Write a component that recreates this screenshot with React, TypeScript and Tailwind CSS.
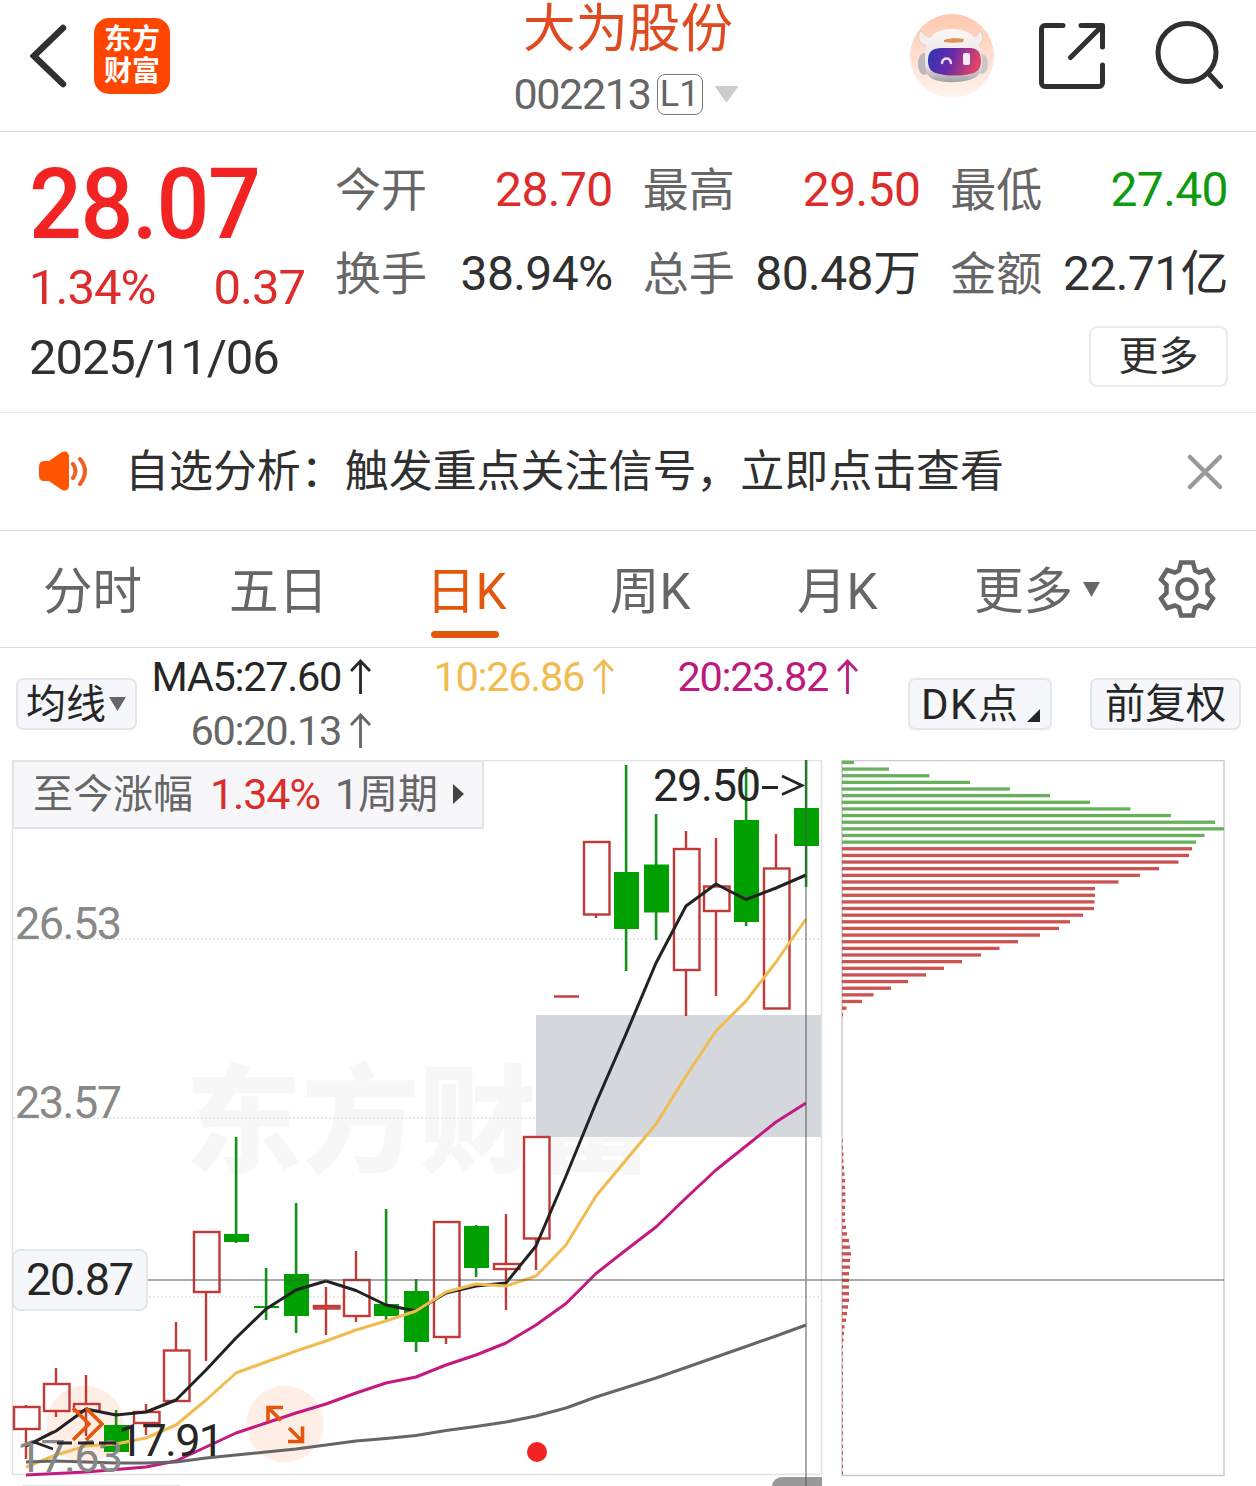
import type { ReactNode } from "react";
import clsx from "clsx";

type Candle = {
  up: boolean;
  high: number;
  top: number;
  bottom: number;
  low: number;
};

type Stat = {
  label: string;
  value: string;
  color: string;
};

const stats: Stat[] = [
  { label: "今开", value: "28.70", color: "text-[#dd2c2c]" },
  { label: "最高", value: "29.50", color: "text-[#dd2c2c]" },
  { label: "最低", value: "27.40", color: "text-[#0f9a0f]" },
  { label: "换手", value: "38.94%", color: "text-[#303030]" },
  { label: "总手", value: "80.48万", color: "text-[#303030]" },
  { label: "金额", value: "22.71亿", color: "text-[#303030]" },
];

const tabs = [
  { name: "分时", width: "w-[186px]" },
  { name: "五日", width: "w-[197px]" },
  { name: "日K", width: "w-[184px]", active: true },
  { name: "周K", width: "w-[187px]" },
  { name: "月K", width: "w-[177px]" },
];

const candles: Candle[] = [
  { up: true, high: 1405, top: 1407, bottom: 1429, low: 1459 },
  { up: true, high: 1368, top: 1384, bottom: 1411, low: 1417 },
  { up: true, high: 1375, top: 1404, bottom: 1411, low: 1436 },
  { up: false, high: 1410, top: 1425, bottom: 1452, low: 1452 },
  { up: true, high: 1404, top: 1412, bottom: 1423, low: 1435 },
  { up: true, high: 1322, top: 1350.5, bottom: 1401, low: 1401 },
  { up: true, high: 1232, top: 1232, bottom: 1292, low: 1361 },
  { up: false, high: 1137, top: 1234, bottom: 1242, low: 1243 },
  { up: false, high: 1268, top: 1306, bottom: 1308, low: 1320 },
  { up: false, high: 1203, top: 1274, bottom: 1316, low: 1333 },
  { up: true, high: 1287, top: 1306, bottom: 1308.5, low: 1335 },
  { up: true, high: 1251, top: 1280, bottom: 1316, low: 1322 },
  { up: false, high: 1209, top: 1304, bottom: 1316, low: 1320 },
  { up: false, high: 1279, top: 1291, bottom: 1342, low: 1352 },
  { up: true, high: 1222, top: 1222, bottom: 1337, low: 1344 },
  { up: false, high: 1225, top: 1226, bottom: 1268, low: 1277 },
  { up: true, high: 1214, top: 1264, bottom: 1269, low: 1310 },
  { up: true, high: 1137, top: 1137, bottom: 1238.5, low: 1270 },
  { up: true, high: 996.5, top: 996.5, bottom: 996.5, low: 996.5 },
  { up: true, high: 842, top: 842, bottom: 914.5, low: 918 },
  { up: false, high: 765, top: 872, bottom: 929, low: 971 },
  { up: false, high: 814, top: 864.5, bottom: 912.5, low: 940 },
  { up: true, high: 831, top: 849, bottom: 970, low: 1016 },
  { up: true, high: 838, top: 886.5, bottom: 911, low: 996 },
  { up: false, high: 767, top: 820, bottom: 922, low: 926 },
  { up: true, high: 834, top: 868.5, bottom: 1008.5, low: 1008.5 },
  { up: false, high: 760, top: 808, bottom: 846, low: 887 },
];

// Moving averages, one value per candle
const ma5 = [
  1446, 1431, 1409, 1415, 1412, 1400, 1370, 1338, 1309, 1290, 1281, 1290.5, 1305, 1311,
  1293, 1286, 1283, 1246, 1176, 1103, 1034, 963, 906, 884, 899.5, 888, 875,
];
const ma10 = [
  1467, 1455, 1446, 1444, 1438, 1425, 1400, 1373, 1362, 1351, 1341, 1330, 1321, 1311,
  1292, 1284, 1286, 1276, 1245, 1196, 1160, 1124, 1076, 1031, 1001, 962, 919,
];
const ma20 = [
  1475, 1473.5, 1472, 1469.5, 1467, 1461, 1447, 1433, 1423, 1413, 1404, 1393, 1383, 1377,
  1365, 1355, 1343, 1325, 1303.5, 1273.5, 1250, 1227, 1198, 1170, 1146, 1122, 1103,
];
const ma60 = [
  1462, 1461, 1462, 1463, 1463, 1462, 1458, 1455, 1452, 1449, 1445, 1441, 1438.5, 1435.5,
  1430.5, 1426.5, 1422, 1416, 1408, 1397, 1387.5, 1378, 1367.5, 1357, 1346.5, 1336, 1325,
];

// Chip distribution, row index -> bar length
const chipTop = [
  12, 47, 87.5, 128, 168, 208, 248, 288.5, 329, 373, 382, 362.5, 354, 350, 347, 336.5, 317,
  298, 276.5, 253, 253, 252.5, 252, 241, 228, 217, 198, 176, 157.5, 139, 120, 102, 84, 66,
  49, 31.5, 20, 4.5, 1,
];
const chipLow = [
  0.7, 1, 1.5, 1.5, 2, 2.5, 3, 3, 3.5, 3.5, 3, 3, 3, 4, 5, 7, 8, 9, 8, 8, 7, 7, 7, 7, 7, 6,
  5, 4, 2.5, 2, 1.5,
];
const chips = [
  ...chipTop,
  ...Array<number>(18).fill(0),
  ...chipLow,
  ...Array<number>(20).fill(0.9),
];

const candleX = (i: number) => 26 + i * 30;

const toPoints = (values: number[]) =>
  values.map((v, i) => `${candleX(i)},${v}`).join(" ");

const RobotAvatar = () => (
  <svg width="84" height="84" viewBox="0 0 84 84">
    <defs>
      <linearGradient id="halo" x1="0" y1="0" x2="0" y2="1">
        <stop offset="0" stopColor="#ffc8ae" />
        <stop offset="1" stopColor="#fff4ef" />
      </linearGradient>
      <linearGradient id="visor" x1="0" y1="0" x2="1" y2="0.2">
        <stop offset="0" stopColor="#2b36b4" />
        <stop offset="0.5" stopColor="#6a2aa6" />
        <stop offset="1" stopColor="#e04468" />
      </linearGradient>
      <linearGradient id="helmet" x1="0" y1="0" x2="0" y2="1">
        <stop offset="0" stopColor="#fbf8f7" />
        <stop offset="0.7" stopColor="#e6e2e4" />
        <stop offset="1" stopColor="#a39ea2" />
      </linearGradient>
    </defs>
    <circle cx="42" cy="42" r="42" fill="url(#halo)" />
    <path d="M11 16c-5 7-2 15 7 16l8-9c-7 1-13-1-15-7zM70 16c5 7 3 15-5 16l-8-9c7 1 11-1 13-7z" fill="#f6eeeb" stroke="#dcc9c2" strokeWidth="0.800" />
    <ellipse cx="14" cy="50" rx="6" ry="11" fill="#bdb6ba" />
    <ellipse cx="72" cy="50" rx="6" ry="10" fill="#cdc6c9" />
    <path d="M15 45c0-20 8-30 27-30s27 9 30 30c1 13-3 18-13 21-12 3-23 3-34 0-9-3-10-10-10-21z" fill="url(#helmet)" />
    <path d="M34 26c5-2 14-2 20-1l-1 3c-6 1-13 1-19 0z" fill="#df9357" />
    <path d="M18 47c0-10 5-13 14-13h28c8 0 11 5 11 13 0 8-4 12-11 13-10 2-22 2-30 0-8-1-12-5-12-13z" fill="url(#visor)" />
    <path d="M32 49c1-6 8-6 9 0" fill="none" stroke="#e9dcff" strokeWidth="2.400" strokeLinecap="round" />
    <rect x="53" y="39" width="7" height="12" rx="2" fill="#f6e9f7" />
  </svg>
);

const Header = () => (
  <header className="flex h-[132px] items-start justify-between border-b border-[#d6d6d6]">
    <div className="flex w-[346px] gap-[27px] pt-[18px] pl-[30px]">
      <svg width="37" height="76" viewBox="0 0 37 76">
        <path d="M33 10 4 38l29 28" fill="none" stroke="#303030" strokeWidth="6.500" strokeLinecap="round" strokeLinejoin="miter" />
      </svg>
      <div className="flex h-[76px] w-[76px] flex-col items-center justify-center rounded-[15px] bg-[#ff4600] text-[28px] leading-[32px] font-bold text-white">
        <span>东方</span>
        <span>财富</span>
      </div>
    </div>

    <div className="flex flex-col items-center">
      <h1 className="text-[52.500px] leading-[59px] text-[#e04a20]">大为股份</h1>
      <div className="mt-[14px] mr-[4px] flex h-[42px] items-center">
        <span className="text-[43px] leading-[42px] tracking-[-1.300px] text-[#666]">002213</span>
        <span className="ml-[6px] flex h-[41px] w-[46px] items-center justify-center rounded-[8px] border border-[#777] text-[36px] leading-[40px] text-[#666]">
          L1
        </span>
        <svg className="ml-[11px]" width="25" height="17" viewBox="0 0 25 17">
          <path d="M1 0h23L12.500 16z" fill="#ccc" stroke="#ccc" strokeLinejoin="round" />
        </svg>
      </div>
    </div>

    <div className="flex w-[346px] items-start justify-end gap-[46px] pt-[14px] pr-[33px]">
      <RobotAvatar />
      <svg className="mt-[9px] -ml-px" width="66" height="66" viewBox="0 0 66 66" fill="none" stroke="#303030" strokeWidth="5" strokeLinecap="round" strokeLinejoin="round">
        <path d="M24 2.500H6a3.500 3.500 0 0 0-3.500 3.500v54A3.500 3.500 0 0 0 6 63.500h54a3.500 3.500 0 0 0 3.500-3.500V42" />
        <path d="M42 2.500h21.500V24M62 4 31.500 34.500" />
      </svg>
      <svg className="mt-[7px] ml-[4px]" width="68" height="68" viewBox="0 0 68 68" fill="none" stroke="#303030" strokeWidth="5" strokeLinecap="round">
        <circle cx="32" cy="31.500" r="29" />
        <path d="m53 52 12.500 13.500" />
      </svg>
    </div>
  </header>
);

const Quote = () => (
  <section className="flex h-[281px] border-b border-[#ebebeb]">
    <div className="flex w-[335px] flex-col pt-[27px] pl-[29px]">
      <strong className="origin-left scale-x-94 text-[99px] leading-[90px] font-medium tracking-[-1.500px] text-[#f12323]">
        28.07
      </strong>
      <div className="mt-[14px] flex w-[276px] justify-between text-[49px] leading-[50px] tracking-[-1px] text-[#dd2c2c]">
        <span>1.34%</span>
        <span>0.37</span>
      </div>
      <span className="mt-[20px] text-[49px] leading-[50px] tracking-[-1.100px] text-[#303030]">
        2025/11/06
      </span>
    </div>

    <div className="flex w-[893px] flex-col items-end pt-[30px]">
      <div className="grid w-full grid-cols-3 gap-x-[30px] gap-y-[28px]">
        {stats.map((stat) => (
          <div key={stat.label} className="flex h-[56px] items-baseline justify-between leading-[56px] whitespace-nowrap">
            <span className="text-[46px] text-[#666]">{stat.label}</span>
            <span className={clsx("text-[48px] tracking-[-0.600px]", stat.color)}>{stat.value}</span>
          </div>
        ))}
      </div>
      <button className="mt-[24px] h-[61px] w-[139px] rounded-[8px] border-2 border-[#ebebeb] text-[40px] leading-[54px] text-[#303030]">
        更多
      </button>
    </div>
  </section>
);

const Notice = () => (
  <section className="flex h-[118px] items-center border-b border-[#d9d9d9] pr-[33px] pl-[38px]">
    <svg width="50" height="42" viewBox="0 0 50 42" fill="none">
      <path d="M1 16q0-6 5-6h5l13-9q6-2 7 4v30q-1 6-7 4l-13-9H6q-5 0-5-6z" fill="#ff5500" />
      <path d="M35 13q5 7 0 14M42 8q10 12 0 25" stroke="#f06022" strokeWidth="4" strokeLinecap="round" />
    </svg>
    <p className="ml-[37px] flex-1 text-[44px] leading-[60px] tracking-[-0.050px] text-[#303030]">
      自选分析：触发重点关注信号，立即点击查看
    </p>
    <svg width="36" height="36" viewBox="0 0 36 36">
      <path d="m3 3 30 30M33 3 3 33" stroke="#999" strokeWidth="4.500" strokeLinecap="round" />
    </svg>
  </section>
);

const Tabs = () => (
  <nav className="flex h-[117px] border-b border-[#d9d9d9] pl-[43px] text-[49.500px] leading-[60px] text-[#666]">
    {tabs.map((tab) => (
      <div key={tab.name} className={clsx("pt-[31px]", tab.width)}>
        <span className={clsx(tab.active && "text-[#e2570b]")}>{tab.name}</span>
        {tab.active && <div className="mt-[9px] ml-[5px] h-[7px] w-[68px] rounded-full bg-[#e2570b]" />}
      </div>
    ))}
    <div className="flex w-[184px] pt-[31px]">
      更多
      <svg className="mt-[20px] ml-[10px]" width="17" height="15" viewBox="0 0 17 15">
        <path d="M0 0h17L8.500 15z" fill="#666" />
      </svg>
    </div>
    <svg className="mt-[29px]" width="58" height="58" viewBox="-29 -29 58 58" fill="none" stroke="#666" strokeWidth="4.500">
      <path d="M-6-26.500H6L8-18.500 12-16.500 20-19 26-9.500 20.500-4V4L26 9.500 20 19 12 16.500 8 18.500 6 26.500H-6L-8 18.500-12 16.500-20 19-26 9.500-20.500 4V-4L-26-9.500-20-19-12-16.500-8-18.500Z" />
      <circle r="9.500" />
    </svg>
  </nav>
);

const MaValue = ({ children, className }: { children: ReactNode; className: string }) => (
  <div className={clsx("flex items-center justify-end text-[41.500px] leading-[54px] tracking-[-1.300px] whitespace-nowrap", className)}>
    {children}
    <svg className="ml-[9px]" width="21" height="36" viewBox="0 0 21 36" fill="none" stroke="currentColor" strokeWidth="2.800">
      <path d="M10.500 35V2M1 12l9.500-10L20 12" />
    </svg>
  </div>
);

const Indicators = () => (
  <section className="flex h-[112px] text-[#262626]">
    <button className="mt-[30px] ml-[16px] flex h-[52px] w-[121px] items-center rounded-[7px] border-2 border-[#e3e5e9] bg-[#f6f7fa] pl-[8px] text-[40px] leading-[48px]">
      <span className="mt-[2px]">均线</span>
      <svg className="ml-[3px]" width="17" height="14" viewBox="0 0 17 14">
        <path d="M0 0h17L8.500 14z" fill="#666" />
      </svg>
    </button>
    <div className="grid w-[735px] grid-cols-[234px_243px_244px] content-start pt-[2px]">
      <MaValue className="text-[#262626]">MA5:27.60</MaValue>
      <MaValue className="text-[#f0bc52]">10:26.86</MaValue>
      <MaValue className="text-[#bd1a7e]">20:23.82</MaValue>
      <MaValue className="text-[#666]">60:20.13</MaValue>
    </div>
    <button className="mt-[30px] ml-[36px] flex h-[52px] w-[144px] rounded-[7px] border-2 border-[#e3e5e9] bg-[#f6f7fa] pl-[11px] text-[40px] leading-[49px]">
      <span className="text-[42px] tracking-[1.500px]">DK</span>点
      <svg className="mt-[29px] ml-[9px]" width="13" height="13" viewBox="0 0 13 13">
        <path d="M13 0v13H0z" fill="#262626" />
      </svg>
    </button>
    <button className="mt-[30px] ml-[38px] h-[52px] w-[151px] rounded-[7px] border-2 border-[#e3e5e9] bg-[#f6f7fa] text-[40.500px] leading-[49px]">
      前复权
    </button>
  </section>
);

const CandleShape = ({ candle, x }: { candle: Candle; x: number }) => {
  const { up, high, top, bottom, low } = candle;

  if (!up) {
    return (
      <g fill="#00a000">
        <rect x={x - 1.2} y={high} width="2.600" height={low - high} fill="#14901a" />
        <rect x={x - 12} y={top} width="25" height={bottom - top} />
      </g>
    );
  }

  return (
    <g fill="none" stroke="#c03a38" strokeWidth="2.400">
      <path d={`M${x} ${high}V${top}M${x} ${bottom}V${low}`} />
      {bottom === top ? (
        <path d={`M${x - 12} ${top}h25`} />
      ) : (
        <rect x={x - 12} y={top} width="25.500" height={bottom - top} />
      )}
    </g>
  );
};

const Chart = () => (
  <section className="relative h-[726px]">
    <svg className="block" width="1256" height="726" viewBox="0 760 1256 726">
      <text x="185" y="1163" fontSize="117" fontWeight="900" fill="#f7f7f7">
        东方财富
      </text>
      <rect x="536" y="1015" width="285" height="122" fill="#d4d7dc" />

      <g stroke="#e2e2e2" strokeWidth="1.500">
        <path d="M13 939H820M13 1118H535M13 1297H820" strokeDasharray="2 2" />
        <path d="M12.500 760.500H821.500V1474.500H12.500Z" fill="none" />
      </g>

      {/* Floating action backdrops */}
      <circle cx="85" cy="1424" r="38.500" fill="#feeee6" />
      <circle cx="285" cy="1424" r="38.500" fill="#feeee6" />

      {candles.map((candle, i) => (
        <CandleShape key={i} candle={candle} x={candleX(i)} />
      ))}

      <g fill="none" strokeWidth="3" strokeLinejoin="round">
        <polyline points={toPoints(ma5)} stroke="#222" />
        <polyline points={toPoints(ma10)} stroke="#f0bc52" />
        <polyline points={toPoints(ma20)} stroke="#c41a80" />
        <polyline points={toPoints(ma60)} stroke="#666" />
      </g>

      <g fontSize="45" fill="#888">
        <text x="15" y="939" textLength="107">26.53</text>
        <text x="15" y="1118" textLength="107">23.57</text>
        <text x="17" y="1472" textLength="106">17.63</text>
      </g>

      <g fontSize="45" fill="#262626">
        <text x="653" y="801" textLength="108">29.50</text>
        <text x="118" y="1456" textLength="106">17.91</text>
      </g>
      <g fill="none" stroke="#262626" strokeWidth="2.800">
        <path d="M762 787.500h16M782 776l20 9.500-20 9" />
        <path d="m53 1432-19 10 19 7M57 1443h15M78 1443h16M99 1443h17" />
      </g>

      <g fill="none" stroke="#e2570b" strokeWidth="3.600">
        <path d="m73 1408 16 16-16 16M86 1408l16 16-16 16" />
        <path d="M283 1407.500h-15v14M268 1407.500l13 13M288 1441.500h14.500v-15M302 1441l-13-13" />
      </g>
      <circle cx="537" cy="1452" r="10" fill="#f12323" />

      {/* Chip distribution */}
      <rect x="842" y="760.500" width="382" height="715" fill="none" stroke="#ccc" strokeWidth="1.500" />
      {chips.map((length, i) => (
        <rect
          key={i}
          x="842"
          y={760.8 + i * 6.64}
          width={length}
          height="3.300"
          fill={i < 13 ? "#68b05b" : "#cb5352"}
        />
      ))}

      {/* Crosshair */}
      <path d="M784 1477H822V1486H772Q773 1477 784 1477Z" fill="#999" />
      <path d="M147 1280H1224M806 760V1486" stroke="#555" strokeOpacity="0.650" strokeWidth="1.500" />
      <rect x="13" y="1250" width="134" height="60" rx="7" fill="#f6f7fa" stroke="#dfe1e5" strokeWidth="1.500" />
      <text x="26" y="1295" fontSize="45" fill="#262626" textLength="108">20.87</text>
      <path d="M22 1485.500H180" stroke="#e2e2e2" />
    </svg>

    <div className="absolute top-0 left-[12px] flex h-[69px] w-[472px] border-2 border-[#e4e4e6] bg-[#f7f7fa] pl-[19px] text-[40px] leading-[65px] text-[#666]">
      至今涨幅
      <span className="ml-[17px] text-[43px] leading-[64px] tracking-[-1.100px] text-[#dd2c2c]">1.34%</span>
      <span className="ml-[15px] text-[43px] leading-[64px] tracking-[-1px]">1</span>周期
      <svg className="mt-[22px] ml-[15px]" width="11" height="20" viewBox="0 0 11 20">
        <path d="M0 0v20l11-10z" fill="#444" />
      </svg>
    </div>
  </section>
);

export default function App() {
  return (
    <main className="h-[1486px] w-[1256px] overflow-hidden bg-white font-[Roboto,'Noto_Sans_CJK_SC',sans-serif]">
      <Header />
      <Quote />
      <Notice />
      <Tabs />
      <Indicators />
      <Chart />
    </main>
  );
}
